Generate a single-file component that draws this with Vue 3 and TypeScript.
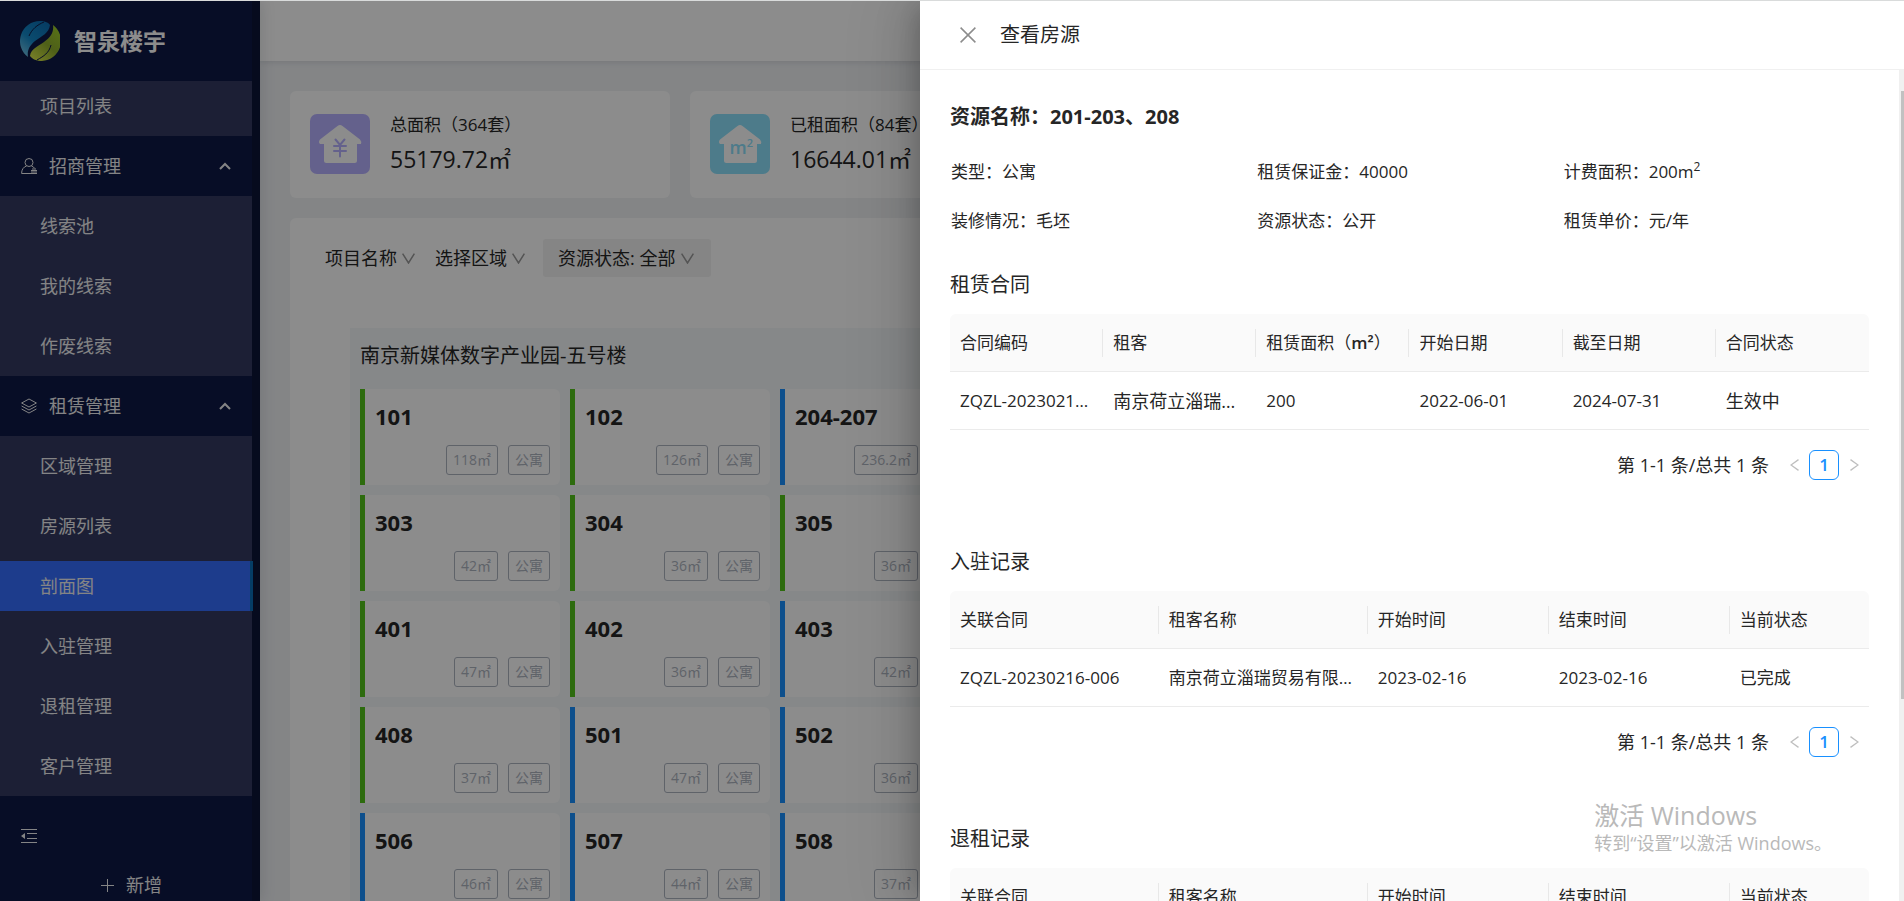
<script setup lang="ts">
import { ref } from 'vue'

interface MenuGroup {
  title: string
  icon: 'user' | 'layers'
  items: string[]
}

interface Room {
  name: string
  area: string
  state: 'free' | 'rented'
}

interface Column {
  title: string
  unit?: string
  width: number
}

interface RecordTable {
  title: string
  kind: 'contract' | 'record'
  columns: Column[]
  row: string[]
}

const groups: MenuGroup[] = [
  { title: '招商管理', icon: 'user', items: ['线索池', '我的线索', '作废线索'] },
  { title: '租赁管理', icon: 'layers', items: ['区域管理', '房源列表', '剖面图', '入驻管理', '退租管理', '客户管理'] },
]
const active = ref('剖面图')

const filters = [
  { label: '项目名称', filled: false },
  { label: '选择区域', filled: false },
  { label: '资源状态: 全部', filled: true },
]

const room = (name: string, area: string, state: Room['state']): Room => ({ name, area, state })
const rooms: Room[] = [
  room('101', '118㎡', 'free'), room('102', '126㎡', 'free'), room('204-207', '236.2㎡', 'rented'),
  room('303', '42㎡', 'free'), room('304', '36㎡', 'free'), room('305', '36㎡', 'free'),
  room('401', '47㎡', 'free'), room('402', '36㎡', 'free'), room('403', '42㎡', 'rented'),
  room('408', '37㎡', 'free'), room('501', '47㎡', 'rented'), room('502', '36㎡', 'rented'),
  room('506', '46㎡', 'rented'), room('507', '44㎡', 'rented'), room('508', '37㎡', 'rented'),
]

const details = [
  { label: '类型', value: '公寓' },
  { label: '租赁保证金', value: '40000' },
  { label: '计费面积', value: '200m', sup: '2' },
  { label: '装修情况', value: '毛坯' },
  { label: '资源状态', value: '公开' },
  { label: '租赁单价', value: '元/年' },
]

const recordColumns: Column[] = [
  { title: '关联合同', width: 150 },
  { title: '租客名称', width: 150 },
  { title: '开始时间', width: 130 },
  { title: '结束时间', width: 130 },
  { title: '当前状态', width: 100 },
]

const tables: RecordTable[] = [
  {
    title: '租赁合同',
    kind: 'contract',
    columns: [
      { title: '合同编码', width: 100 },
      { title: '租客', width: 100 },
      { title: '租赁面积', unit: 'm²', width: 100 },
      { title: '开始日期', width: 100 },
      { title: '截至日期', width: 100 },
      { title: '合同状态', width: 100 },
    ],
    row: ['ZQZL-20230216-006', '南京荷立淄瑞贸易有限公司', '200', '2022-06-01', '2024-07-31', '生效中'],
  },
  {
    title: '入驻记录',
    kind: 'record',
    columns: recordColumns,
    row: ['ZQZL-20230216-006', '南京荷立淄瑞贸易有限公司', '2023-02-16', '2023-02-16', '已完成'],
  },
  { title: '退租记录', kind: 'record', columns: recordColumns, row: [] },
]

const isCjk = (text: string) => /[\u4e00-\u9fff]/.test(text)
</script>

<template>
  <div class="app">
    <aside class="sidebar">
      <div class="brand">
        <svg class="logo" viewBox="0 0 40 40" aria-hidden="true">
          <defs>
            <linearGradient id="leafBlue" x1="0.8" y1="0" x2="0.1" y2="1">
              <stop offset="0" stop-color="#0b6fb5" />
              <stop offset="0.55" stop-color="#1489c9" />
              <stop offset="1" stop-color="#78c6e6" />
            </linearGradient>
            <linearGradient id="leafGreen" x1="0.9" y1="0" x2="0.1" y2="1">
              <stop offset="0" stop-color="#9fd02b" />
              <stop offset="0.5" stop-color="#8fae2c" />
              <stop offset="1" stop-color="#dbe84a" />
            </linearGradient>
          </defs>
          <path d="M8 36A20 20 0 0 1 20 0C25 0 29 2 30 4C29 12 22 15 15 20C9 25 7 30 8 36Z" fill="url(#leafBlue)" />
          <path d="M33 4A20 20 0 0 1 22 40C17 40 12 38 10 35C11 28 17 26 24 21C31 16 34 11 33 4Z" fill="url(#leafGreen)" />
          <path d="M24 1C17 4 12 8 9 15" fill="none" stroke="#0e1945" stroke-width="1" />
          <path d="M31 24C29 32 24 35 17 39" fill="none" stroke="#0e1945" stroke-width="1" />
        </svg>
        <h1>智泉楼宇</h1>
      </div>
      <nav>
        <a class="item top" href="#">项目列表</a>
        <section v-for="g in groups" :key="g.title">
          <button class="group" type="button" aria-expanded="true">
            <svg v-if="g.icon === 'user'" class="gicon" viewBox="0 0 16 16" fill="none" stroke="currentColor" aria-hidden="true">
              <circle cx="8" cy="4.5" r="4" />
              <path d="M5.5 8C2.500 9 .6 11.500 .6 15.500H10M10.500 8C12 8.600 13 9.300 13.700 10.300" />
              <path d="M10 12.500H16M10 14H16M10 15.500H16M11 11H15" />
            </svg>
            <svg v-else class="gicon" viewBox="0 0 16 16" fill="none" stroke="currentColor" aria-hidden="true">
              <path d="M8 1L15.400 5L8 9L.6 5Z" />
              <path d="M.6 8L8 12L15.400 8M.6 11L8 15L15.400 11" />
            </svg>
            <span>{{ g.title }}</span>
            <svg class="caret" viewBox="0 0 12 8" fill="none" stroke="currentColor" stroke-width="2" aria-hidden="true">
              <path d="M1 7L6 2L11 7" />
            </svg>
          </button>
          <div class="sub">
            <a v-for="t in g.items" :key="t" class="item" :class="{ active: t === active }" href="#" @click.prevent="active = t">{{ t }}</a>
          </div>
        </section>
      </nav>
      <button class="collapse" type="button" aria-label="收起菜单">
        <svg viewBox="0 0 16 14" aria-hidden="true">
          <path d="M0 0H16V1H0ZM0 13H16V14H0ZM6 4H16V5H6ZM6 9H16V10H6ZM4 4V10L0 7Z" fill="currentColor" />
        </svg>
      </button>
      <button class="add" type="button">
        <svg viewBox="0 0 13 13" aria-hidden="true"><path d="M6 0H7V6H13V7H7V13H6V7H0V6H6Z" fill="currentColor" /></svg>
        <span>新增</span>
      </button>
    </aside>

    <div class="page">
      <header class="topbar"></header>
      <main class="content">
        <div class="stats">
          <section class="stat">
            <svg class="house purple" viewBox="0 0 60 60" aria-hidden="true">
              <rect width="60" height="60" rx="7" />
              <path class="roof" d="M27.500 12Q30 10 32.500 12L50 25.500Q52 28 51 30H47V46.500Q47 49 44.500 49H16.500Q14 49 14 46.500V30H10Q8 28 10 25.500Z" />
              <path class="yen" d="M25.500 25.500L30 31L34.500 25.500M30 31V42.500M24 32H36M24 37H36" />
            </svg>
            <div class="figures">
              <p>总面积（364套）</p>
              <strong>55179.72㎡</strong>
            </div>
          </section>
          <section class="stat">
            <svg class="house cyan" viewBox="0 0 60 60" aria-hidden="true">
              <rect width="60" height="60" rx="7" />
              <path class="roof" d="M27.500 12Q30 10 32.500 12L50 25.500Q52 28 51 30H47V46.500Q47 49 44.500 49H16.500Q14 49 14 46.500V30H10Q8 28 10 25.500Z" />
              <text x="28" y="40" font-size="18">m</text>
              <text x="40" y="33" font-size="11">2</text>
            </svg>
            <div class="figures">
              <p>已租面积（84套）</p>
              <strong>16644.01㎡</strong>
            </div>
          </section>
        </div>

        <section class="panel">
          <div class="filters">
            <label v-for="f in filters" :key="f.label" class="filter" :class="{ filled: f.filled }">
              <select :aria-label="f.label"><option>{{ f.label }}</option></select>
              <svg viewBox="0 0 13 11" fill="none" stroke="currentColor" stroke-width="1.500" aria-hidden="true"><path d="M.6 .6L6.500 10L12.400 .6" /></svg>
            </label>
          </div>
          <div class="building">
            <h2>南京新媒体数字产业园-五号楼</h2>
            <div class="rooms">
              <article v-for="r in rooms" :key="r.name" class="room" :class="r.state">
                <h3>{{ r.name }}</h3>
                <div class="tags"><span>{{ r.area }}</span><span>公寓</span></div>
              </article>
            </div>
          </div>
        </section>
      </main>
    </div>

    <div class="mask"></div>

    <section class="drawer" role="dialog" aria-label="查看房源">
      <header class="drawer-head">
        <button type="button" aria-label="关闭">
          <svg viewBox="0 0 16 16" fill="none" stroke="currentColor" stroke-width="1.500" aria-hidden="true"><path d="M.6 .6L15.400 15.400M15.400 .6L.6 15.400" /></svg>
        </button>
        <h2>查看房源</h2>
      </header>
      <div class="drawer-main">
        <div class="drawer-body">
          <h3 class="name">资源名称：201-203、208</h3>
          <dl class="details">
            <div v-for="d in details" :key="d.label">
              <dt>{{ d.label }}：</dt>
              <dd>{{ d.value }}<sup v-if="d.sup">{{ d.sup }}</sup></dd>
            </div>
          </dl>
          <section v-for="t in tables" :key="t.title" class="block" :class="t.kind">
            <h4>{{ t.title }}</h4>
            <table>
              <colgroup>
                <col v-for="c in t.columns" :key="c.title" :style="{ width: c.width + 'px' }" />
              </colgroup>
              <thead>
                <tr>
                  <th v-for="c in t.columns" :key="c.title" scope="col">
                    <div>{{ c.title }}<template v-if="c.unit">（<b>{{ c.unit }}</b>）</template></div>
                  </th>
                </tr>
              </thead>
              <tbody v-if="t.row.length">
                <tr>
                  <td v-for="(v, i) in t.row" :key="i" :class="{ cjk: isCjk(v) }">{{ v }}</td>
                </tr>
              </tbody>
            </table>
            <nav v-if="t.row.length" class="pager" :aria-label="t.title">
              <span>第 1-1 条/总共 1 条</span>
              <button type="button" disabled aria-label="上一页">
                <svg viewBox="0 0 9 12" fill="none" stroke="currentColor" stroke-width="1.300" aria-hidden="true"><path d="M8.500 .6L1 6L8.500 11.400" /></svg>
              </button>
              <button class="current" type="button">1</button>
              <button type="button" disabled aria-label="下一页">
                <svg viewBox="0 0 9 12" fill="none" stroke="currentColor" stroke-width="1.300" aria-hidden="true"><path d="M.5 .6L8 6L.5 11.400" /></svg>
              </button>
            </nav>
          </section>
        </div>
        <div class="scrollbar"><i></i></div>
      </div>
    </section>

    <div class="watermark">
      <p class="big">激活 Windows</p>
      <p>转到“设置”以激活 Windows。</p>
    </div>
  </div>
</template>

<style>
body {
  overflow: hidden;
}
</style>

<style scoped>
.app,
.app * {
  box-sizing: border-box;
}
.app {
  position: relative;
  display: flex;
  height: 100vh;
  overflow: hidden;
  border-top: 1px solid #d9dbdb;
  background: #f0f2f5;
  color: #262626;
  font: 18px/28px "Open Sans", "Noto Sans CJK SC", sans-serif;
}
h1, h2, h3, h4, p, dl, dd {
  margin: 0;
  font-weight: 400;
}
button, select {
  margin: 0;
  padding: 0;
  border: 0;
  background: none;
  color: inherit;
  font: inherit;
}
svg {
  display: block;
  flex: none;
}
a {
  color: inherit;
  text-decoration: none;
}

.sidebar {
  display: flex;
  flex: none;
  flex-direction: column;
  width: 260px;
  background: #0e1945;
  border-right: 8px solid #0c1538;
  color: #f0f0f2;
  z-index: 1;
  box-shadow: 2px 0 14px rgba(0, 21, 41, 0.12);
}
.brand {
  display: flex;
  align-items: center;
  gap: 14px;
  height: 80px;
  padding-left: 20px;
}
.logo {
  width: 40px;
  height: 40px;
}
.brand h1 {
  color: #fff;
  font-size: 23px;
  font-weight: 700;
}
.item {
  display: block;
  height: 50px;
  margin: 5px 0;
  padding-left: 40px;
  line-height: 50px;
}
.item.top {
  height: 55px;
  margin: 0;
  background: #333a62;
}
.item.active {
  margin-right: -1px;
  border-right: 3px solid #0a6fb8;
  background: #356dff;
}
.group {
  display: flex;
  align-items: center;
  width: 100%;
  height: 60px;
  padding: 0 21px;
  text-align: left;
}
.group span {
  flex: 1;
}
.gicon {
  width: 16px;
  height: 16px;
  margin-right: 12px;
}
.caret {
  width: 12px;
  height: 8px;
}
.sub {
  display: flow-root;
  background: #333a62;
}
.sub .item {
  margin-bottom: 10px;
}
.sub .item:last-child {
  margin-bottom: 5px;
}
.collapse {
  align-self: flex-start;
  margin: 33px 0 0 21px;
}
.collapse svg {
  width: 16px;
  height: 14px;
}
.add {
  display: flex;
  align-items: center;
  gap: 12px;
  margin: 28px 0 0 101px;
}
.add svg {
  width: 13px;
  height: 13px;
}

.page {
  flex: 1;
  min-width: 0;
}
.topbar {
  height: 60px;
  background: #fff;
  box-shadow: 0 1px 6px rgba(0, 21, 41, 0.12);
}
.content {
  padding: 30px 34px 0 30px;
}
.stats {
  display: grid;
  grid-template-columns: repeat(4, 1fr);
  gap: 20px;
}
.stat {
  display: flex;
  align-items: flex-start;
  gap: 20px;
  height: 107px;
  padding: 23px 20px;
  border-radius: 6px;
  background: #fff;
}
.house {
  width: 60px;
  height: 60px;
}
.house text {
  text-anchor: middle;
  font-weight: 600;
}
.house.purple rect {
  fill: #b7b1ff;
}
.yen {
  fill: none;
  stroke: #b7b1ff;
  stroke-linecap: round;
  stroke-width: 2;
}
.house.cyan rect, .house.cyan text {
  fill: #8ce0fc;
}
.roof {
  fill: #fff;
}
.figures {
  white-space: nowrap;
}
.figures p {
  font-size: 17px;
  line-height: 22px;
}
.figures strong {
  display: block;
  font-size: 23px;
  font-weight: 400;
  line-height: 46px;
}
.panel {
  height: 100vh;
  margin-top: 20px;
  padding: 21px 34px 0 35px;
  border-radius: 6px;
  background: #fff;
}
.filters {
  display: flex;
  align-items: center;
  gap: 20px;
  height: 38px;
}
.filter {
  display: flex;
  align-items: center;
  gap: 5px;
}
.filter.filled {
  height: 38px;
  padding: 0 17px 0 15px;
  margin-left: -2px;
  border-radius: 3px;
  background: #f2f2f2;
}
.filter select {
  appearance: none;
}
.filter svg {
  width: 13px;
  height: 11px;
  color: #999;
}
.building {
  margin: 51px 0 0 25px;
  padding: 10px;
  background: #f5f7fa;
}
.building h2 {
  height: 51px;
  font-size: 20px;
  line-height: 36px;
}
.rooms {
  display: grid;
  grid-template-columns: repeat(3, 200px);
  gap: 10px;
}
.room {
  display: flex;
  flex-direction: column;
  justify-content: space-between;
  height: 96px;
  padding: 13px 10px 10px;
  border-left: 5px solid #52c41a;
  border-radius: 0 6px 6px 0;
  background: #fff;
}
.room.rented {
  border-left-color: #1890ff;
}
.room h3 {
  font-size: 22px;
  font-weight: 700;
}
.tags {
  display: flex;
  justify-content: flex-end;
  gap: 10px;
}
.tags span {
  height: 30px;
  padding: 0 6px;
  border: 1px solid #aeb4c0;
  border-radius: 3px;
  color: #aeb4c0;
  font-size: 14px;
  line-height: 28px;
}

.mask {
  position: absolute;
  inset: 0;
  z-index: 2;
  background: rgba(0, 0, 0, 0.45);
}
.drawer {
  position: absolute;
  z-index: 3;
  top: 0;
  right: 0;
  bottom: 0;
  display: flex;
  flex-direction: column;
  width: calc(50% + 32px);
  background: #fff;
  box-shadow: -8px 0 20px -8px rgba(0, 0, 0, 0.16), -10px 0 36px rgba(0, 0, 0, 0.12), -12px 0 60px 10px rgba(0, 0, 0, 0.08);
}
.drawer-head {
  display: flex;
  flex: none;
  align-items: center;
  gap: 24px;
  height: 69px;
  padding-left: 40px;
  border-bottom: 1px solid #f0f0f0;
}
.drawer-head svg {
  width: 16px;
  height: 16px;
  color: #8c8c8c;
}
.drawer-head h2 {
  font-size: 20px;
}
.drawer-main {
  display: flex;
  flex: 1;
  min-height: 0;
}
.drawer-body {
  flex: 1;
  min-width: 0;
  overflow: hidden;
  padding: 31px 30px 0;
}
.scrollbar {
  flex: none;
  width: 5px;
  padding: 21px 0 0 2px;
  background: #f0f0f0;
}
.scrollbar i {
  display: block;
  height: 75%;
  background: #c1c1c1;
}
.name {
  height: 48px;
  font-size: 20px;
  font-weight: 700;
  line-height: 32px;
}
.details {
  display: grid;
  grid-template-columns: repeat(3, 1fr);
  font-size: 17px;
}
.details > div {
  display: flex;
  height: 49px;
  padding-left: 1px;
  line-height: 46px;
}
.details sup {
  font-size: 12px;
  line-height: 0;
}
.block {
  height: 277px;
}
.block:nth-of-type(1) {
  margin-top: 22px;
}
.block h4 {
  height: 45px;
  font-size: 20px;
  line-height: 32px;
}
table {
  width: 100%;
  border-collapse: separate;
  border-spacing: 0;
  table-layout: fixed;
}
th, td {
  height: 58px;
  padding: 0 10px;
  overflow: hidden;
  border-bottom: 1px solid #ebebeb;
  font-size: 17px;
  font-weight: 400;
  text-align: left;
  text-overflow: ellipsis;
  white-space: nowrap;
}
.contract td.cjk {
  font-size: 18px;
}
th {
  padding-right: 0;
  background: #fafafa;
}
th b {
  font-weight: 600;
}
th:first-child {
  border-top-left-radius: 6px;
}
th:last-child {
  border-top-right-radius: 6px;
}
th div {
  border-right: 1px solid #e8e8e8;
}
th:last-child div {
  border-right: 0;
}
.pager {
  display: flex;
  align-items: center;
  justify-content: flex-end;
  height: 30px;
  margin-top: 20px;
}
.pager span {
  margin-right: 10px;
}
.pager button {
  display: grid;
  place-items: center;
  width: 30px;
  height: 30px;
  color: #bfbfbf;
}
.pager button svg {
  width: 9px;
  height: 12px;
}
.pager .current {
  border: 1px solid #1890ff;
  border-radius: 6px;
  color: #1890ff;
  font-size: 17px;
  font-weight: 600;
}
.watermark {
  position: absolute;
  z-index: 4;
  right: 72px;
  bottom: 45px;
  color: #b9b9b9;
  font-size: 18px;
  line-height: 26px;
  white-space: nowrap;
}
.watermark .big {
  font-size: 25px;
  line-height: 30px;
}
</style>
